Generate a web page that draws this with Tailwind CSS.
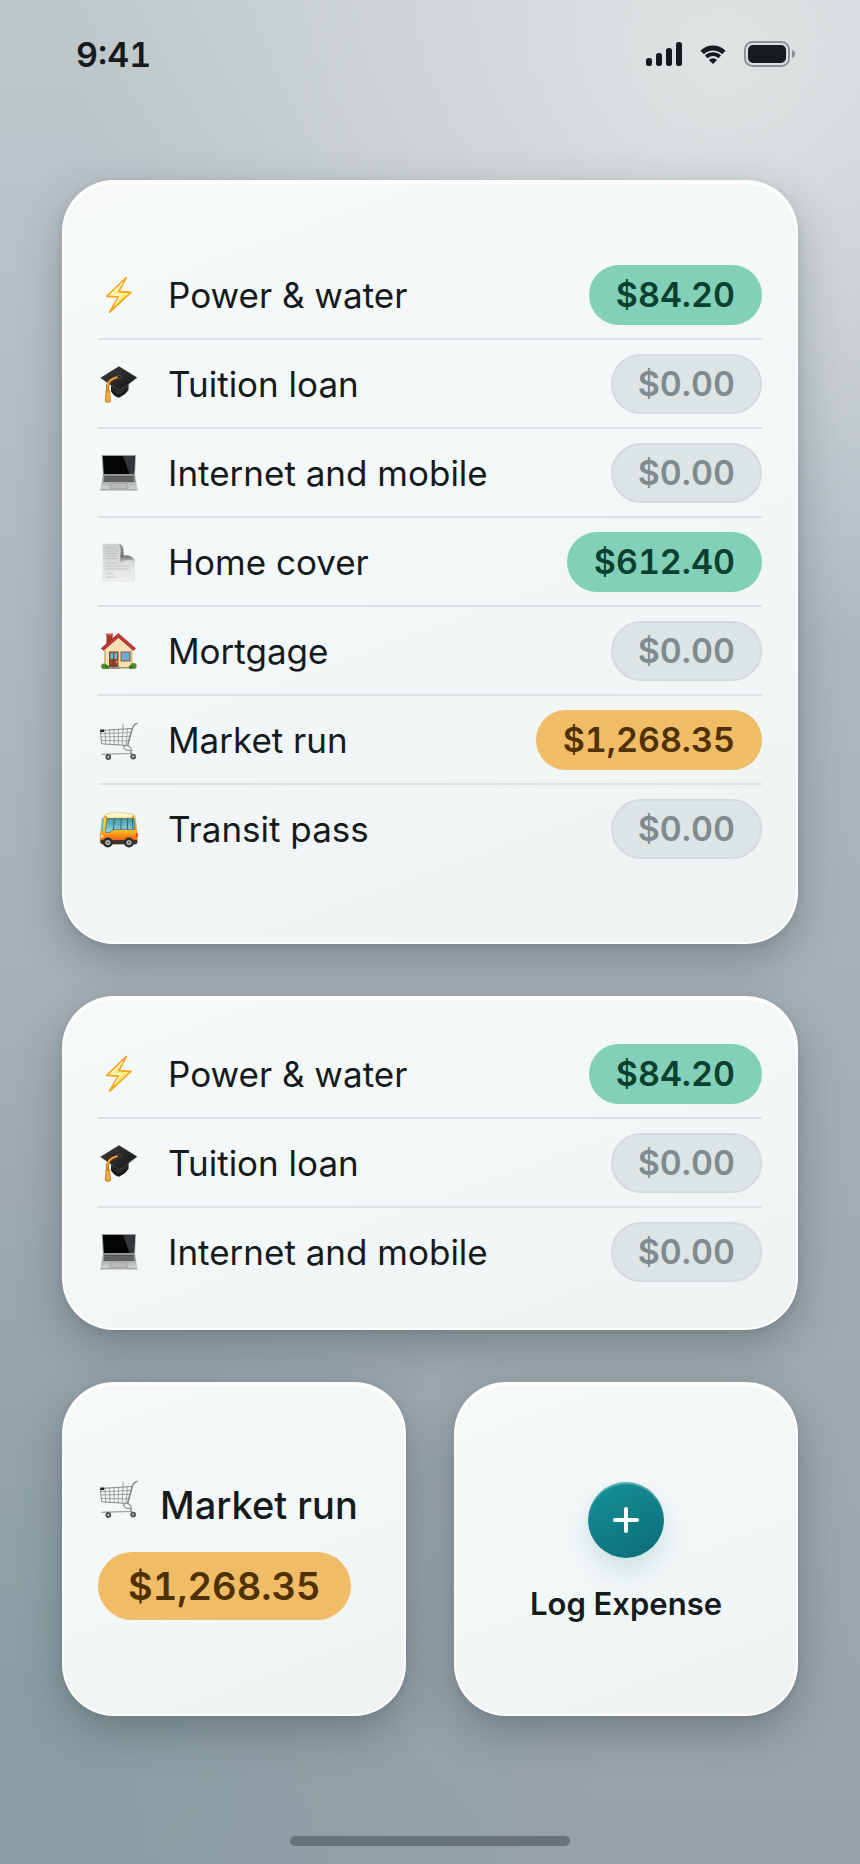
<!DOCTYPE html>
<html lang="en">
<head>
<meta charset="utf-8">
<meta name="viewport" content="width=device-width, initial-scale=1">
<title>Expenses</title>
<script src="https://cdn.jsdelivr.net/npm/@tailwindcss/browser@4"></script>
</head>
<body class="min-h-screen bg-[radial-gradient(ellipse_75%_32%_at_84%_3%,rgba(228,232,232,0.85),rgba(228,232,232,0)),radial-gradient(ellipse_70%_40%_at_0%_94%,rgba(112,146,152,0.4),rgba(112,146,152,0)),linear-gradient(180deg,#c0c8cc_0%,#b1b9c0_30%,#a4adb3_60%,#97a1a9_100%)] font-['Inter','Liberation_Sans',sans-serif] text-[#151b1d]">

<!-- Shared icon definitions -->
<svg class="absolute size-0" aria-hidden="true">
  <defs>
    <linearGradient id="g-bolt" x1="0" y1="0" x2="0" y2="1"><stop offset="0" stop-color="#fff7a8"/><stop offset="1" stop-color="#ffe04a"/></linearGradient>
    <linearGradient id="g-cap" x1="0" y1="0" x2="1" y2="1"><stop offset="0" stop-color="#3d3d3d"/><stop offset="1" stop-color="#151515"/></linearGradient>
    <linearGradient id="g-alu" x1="0" y1="0" x2="0" y2="1"><stop offset="0" stop-color="#8f8f8f"/><stop offset="1" stop-color="#d2d2d2"/></linearGradient>
    <linearGradient id="g-page" x1="0" y1="0" x2="0" y2="1"><stop offset="0" stop-color="#cbcbcb"/><stop offset="1" stop-color="#efefef"/></linearGradient>
    <linearGradient id="g-curl" x1="0" y1="0" x2="0" y2="1"><stop offset="0" stop-color="#9b9b9b"/><stop offset="0.6" stop-color="#6f6f6f"/><stop offset="1" stop-color="#dedede"/></linearGradient>
    <linearGradient id="g-bus" x1="0" y1="0" x2="0" y2="1"><stop offset="0" stop-color="#ffe14d"/><stop offset="0.55" stop-color="#ffc21f"/><stop offset="0.9" stop-color="#ef5a13"/></linearGradient>
    <linearGradient id="g-glass" x1="0" y1="0" x2="0" y2="1"><stop offset="0" stop-color="#4d97a6"/><stop offset="1" stop-color="#8fd9e6"/></linearGradient>
  </defs>
  <symbol id="i-bolt" viewBox="0 0 40 40">
    <path d="M28.2 2.600 8.800 21.300 20.400 22 11.600 37.200 33 17.300 21 16.600Z" fill="url(#g-bolt)" stroke="#f9a51b" stroke-width="1.700" stroke-linejoin="round"/>
    <path d="M25 7.600 13 19.600 23 20.200 17 30" fill="none" stroke="#fffbe0" stroke-width="1.200"/>
  </symbol>
  <symbol id="i-cap" viewBox="0 0 40 40">
    <path d="M13 20v7.500c2 3.500 5 5.500 8 6.300 4-2 8-5 9.500-8.300V17Z" fill="#191919"/>
    <path d="M13 22c2 4 5 6.500 8.500 7.300l9-6.800" fill="none" stroke="#4a4a4a" stroke-width=".8"/>
    <path d="M2.500 13.700 21 2.300l18 11.300L21.500 27Z" fill="url(#g-cap)"/>
    <path d="m2.500 13.700 19 13.300L39 13.600" fill="none" stroke="#565656" stroke-width=".8"/>
    <ellipse cx="21" cy="12.800" rx="2.600" ry="1.200" fill="#1b1b1b" stroke="#707070" stroke-width=".6"/>
    <path d="M19.500 13.300C13.500 15 10 17.500 9.600 22v6" fill="none" stroke="#7c4a08" stroke-width="3"/>
    <path d="M19.500 13.100C13.500 14.500 9.800 17 9.600 22v6" fill="none" stroke="#eda53a" stroke-width="1.900"/>
    <path d="M8 26.500h3.600l1 11c-1.500 1.300-4 1.300-5.400 0Z" fill="#e79a2c" stroke="#b86d10" stroke-width=".6"/>
    <path d="M9.300 29v8M11 29v8" stroke="#ffc970" stroke-width=".6"/>
  </symbol>
  <symbol id="i-laptop" viewBox="0 0 40 40">
    <path d="M3.600 2h34.400l-1 20H5Z" fill="#9b9b9b"/>
    <path d="M4.800 3h32l-.8 18H5.800Z" fill="#050505"/>
    <path d="M25 3h11.800L36 21h-4.500Z" fill="#34373a"/>
    <path d="M5 21.600h32l2.400 14.600H2.400Z" fill="url(#g-alu)"/>
    <path d="M6.500 23h29l1 6h-31Z" fill="#525252"/>
    <path d="M6.300 24.600h29.500M6 26.200h30.200M5.700 27.800h30.800" stroke="#969696" stroke-width=".5" stroke-dasharray="1.600 .5"/>
    <path d="M12.500 30.500h17l.5 5.200H12Z" fill="#bababa" stroke="#969696" stroke-width=".6"/>
    <path d="M2.400 36h37v1.600h-37Z" fill="#aaa"/>
  </symbol>
  <symbol id="i-page" viewBox="0 0 40 40">
    <path d="M5 2h17c2.500 1 3 5 3 12 8-1 11.500 1 11.500 6v19H5Z" fill="url(#g-page)" stroke="#dadada" stroke-width=".5"/>
    <path d="M21 2c4 .5 5 4 4.600 11.600 6-.6 10 1.400 11 5.600-5-2.500-9.500-1-15.400 2.500C22.500 13 24 6 21 2Z" fill="url(#g-curl)"/>
    <path d="M7.500 6h10M7.500 9h13M7.500 11.500h12M7.500 14h13M7.500 16.500h12M7.500 21h12M7.500 24h24M7.500 27h23M7.500 32h8M7.500 35h10" stroke="#b0b0b0" stroke-width=".6"/>
  </symbol>
  <symbol id="i-house" viewBox="0 0 40 40">
    <path d="M8.500 3.500h6V14h-6Z" fill="#a7352b"/><path d="M8 2.500h7v2.200H8Z" fill="#d05a4a"/>
    <path d="M6 17 20.500 4.500 34.500 17v20H6Z" fill="#f5dfb5"/>
    <path d="M6 18h2v19H6Zm26.500 0h2v19h-2Z" fill="#d9bd8b"/>
    <path d="m3.300 17.400 17-14.900L37.500 17.400l-2.200 1.800L20.500 6.600 5.500 19.200Z" fill="#c23a32" stroke="#842018" stroke-width=".7" stroke-linejoin="round"/>
    <path d="M11 20.500h9.500V37H11Z" fill="#8a4a2c"/><path d="M12.500 22h6.500v6h-6.500Z" fill="#6db6df"/><path d="M15.300 22h1v15h-1Z" fill="#643018"/><circle cx="18.700" cy="31" r=".9" fill="#e8c36c"/>
    <path d="M22.500 20.500h10v10h-10Z" fill="#8b623b"/><path d="M23.700 21.700h7.600v7.600h-7.600Z" fill="#66aee0"/>
    <path d="M10 36h12v2H10Z" fill="#9d9489"/><path d="M22 36h10v1.500H22Z" fill="#ad8f60"/>
    <circle cx="6" cy="35.200" r="2.800" fill="#4f8b28"/><circle cx="9" cy="36" r="1.900" fill="#38701c"/><circle cx="35.700" cy="35" r="2.900" fill="#4f8b28"/><circle cx="32.800" cy="36" r="1.900" fill="#38701c"/>
  </symbol>
  <symbol id="i-cart" viewBox="0 0 40 40">
    <g fill="none" stroke="#8a8a8a" stroke-linecap="round">
      <path d="M39 3.500c-2 .3-3.600 2-4.500 4.500l-4.800 17.500" stroke-width="1.400"/>
      <path d="M2.700 10.500 34 8.500l-4.700 17L4 23.800Z" stroke-width="1"/>
      <path d="M3 13.700l29.800-1.200M3.300 17l28.600-.7M3.600 20.500l27.300.4M7 10.300l.8 13.800M11.500 10l.5 14.300M16 9.700l.2 14.800M20.500 9.400l-.2 15.400M25 9.100l-.8 16M29.500 8.800l-1.600 16.400M25 4v5" stroke-width=".75"/>
      <path d="M27 25.500c-3 2.500 0 5.500 5.500 5l1.500 4M29.700 25.500c4 2 4.500 4 2.800 8L4 34.200M9 34l1.500 3" stroke-width="1.100"/>
    </g>
    <path d="M2.300 9.500h3.800v2.600H2.300Z" fill="#202020"/>
    <circle cx="10.300" cy="37" r="2.900" fill="#555"/><circle cx="10.300" cy="37" r="1" fill="#ccc"/>
    <circle cx="35.200" cy="36.600" r="2.900" fill="#555"/><circle cx="35.200" cy="36.600" r="1" fill="#ccc"/>
  </symbol>
  <symbol id="i-bus" viewBox="0 0 40 40">
    <path d="M6.500 7C8 4.500 12 4 21 4s14 .7 16 3l2.300 18v8c0 1.500-1 2-2.300 2H5c-2 0-2.800-.8-2.800-2.500V25Z" fill="url(#g-bus)" stroke="#d58a17" stroke-width=".5"/>
    <path d="M6.500 8.500C8 4.500 12 4 21 4s14 .7 16 4.500Z" fill="#fff5c9"/>
    <path d="M2.700 31h36.500v2.400c0 1.200-1 1.800-2.200 1.800H5c-1.600 0-2.300-1-2.300-2Z" fill="#3d3434"/>
    <path d="M3.700 10.500c.4-1.500 1-2.500 2-2.700L4.800 22H2.600Z" fill="#69b9c7"/>
    <path d="M9 9.500h27l1.200 11H16l-4 2.800H7.300Z" fill="url(#g-glass)" stroke="#376c78" stroke-width=".7"/>
    <path d="M16.500 9.500 15.300 21M23 9.500V20.500M29.500 9.500V20.500M34.300 9.500l.7 11" stroke="#2f626f" stroke-width="1"/>
    <circle cx="8" cy="8.200" r="1.200" fill="#ef8f24"/><circle cx="35" cy="8.200" r="1.200" fill="#ef8f24"/>
    <circle cx="4" cy="27.500" r="1.400" fill="#ffe9a1"/><path d="M38 24h1.500v4H38Z" fill="#d83d18"/>
    <circle cx="9.800" cy="33.500" r="5" fill="#2b2b2b"/><circle cx="9.800" cy="33.500" r="2.600" fill="#b5b5b5"/><circle cx="9.800" cy="33.500" r="1.100" fill="#555"/>
    <circle cx="31" cy="33.500" r="5" fill="#2b2b2b"/><circle cx="31" cy="33.500" r="2.600" fill="#b5b5b5"/><circle cx="31" cy="33.500" r="1.100" fill="#555"/>
  </symbol>
</svg>

<div class="flex min-h-screen flex-col">
  <header class="flex h-[108px] items-center justify-between pr-[64px] pl-[76px]">
    <time class="pt-0.5 text-[34px] leading-10 font-semibold tabular-nums">9:41</time>
    <div class="flex items-center gap-[18px]">
      <svg class="h-6 w-9" viewBox="0 0 36 24" fill="#151b1d" aria-label="Signal"><rect y="16" width="6" height="8" rx="2.500"/><rect x="10" y="11" width="6" height="13" rx="2.500"/><rect x="20" y="6" width="6" height="18" rx="2.500"/><rect x="30" width="6" height="24" rx="2.500"/></svg>
      <svg class="h-5 w-[26px]" viewBox="0 0 26 20" aria-label="Wi-Fi">
        <g fill="none" stroke="#151b1d"><path d="M2.200 8.400a15.300 15.300 0 0 1 21.600 0" stroke-width="5"/><path d="M6.300 12.900a9.500 9.500 0 0 1 13.400 0" stroke-width="3.800"/></g>
        <path d="M8.900 16a5.800 5.800 0 0 1 8.200 0L13 20Z" fill="#151b1d"/>
      </svg>
      <svg class="h-[26px] w-[52px]" viewBox="0 0 52 26" aria-label="Battery"><rect x="1" y="1" width="44" height="24" rx="7.500" fill="none" stroke="#151b1d" stroke-opacity=".4" stroke-width="2"/><rect x="4" y="4" width="38" height="18" rx="5" fill="#151b1d"/><path d="M48 9c4 1.200 4 6.800 0 8Z" fill="#151b1d" fill-opacity=".4"/></svg>
    </div>
  </header>

  <main class="flex flex-col gap-[52px] px-[62px] pt-[72px]">
    <section aria-label="All expenses" class="rounded-[52px] border-2 border-white/90 bg-linear-160 from-[#f7f9f9] via-[#f2f7f8] to-[#eef2f3] px-[34px] pt-[69px] pb-[70px] shadow-[inset_0_2px_0_#fff,0_2px_6px_rgba(40,55,60,0.1),0_16px_44px_rgba(40,55,60,0.32)]">
      <ul class="divide-y-2 divide-[#dde2e4]">
        <li class="flex items-center pt-[14px] pb-[13px]"><svg class="mr-[30px] size-10 shrink-0" aria-hidden="true"><use href="#i-bolt"/></svg><span class="grow text-[35px] leading-[60px]">Power &amp; water</span><span class="rounded-full bg-[#82d0b7] px-[27px] text-[34px] leading-[60px] font-semibold tabular-nums text-[#0a4030]">$84.20</span></li>
        <li class="flex items-center pt-[14px] pb-[13px]"><svg class="mr-[30px] size-10 shrink-0" aria-hidden="true"><use href="#i-cap"/></svg><span class="grow text-[35px] leading-[60px]">Tuition loan</span><span class="rounded-full border-2 border-[#d5dbdd] bg-[#dde4e6] px-[25px] text-[34px] leading-[56px] font-semibold tabular-nums text-[#808b8f]">$0.00</span></li>
        <li class="flex items-center pt-[14px] pb-[13px]"><svg class="mr-[30px] size-10 shrink-0" aria-hidden="true"><use href="#i-laptop"/></svg><span class="grow text-[35px] leading-[60px]">Internet and mobile</span><span class="rounded-full border-2 border-[#d5dbdd] bg-[#dde4e6] px-[25px] text-[34px] leading-[56px] font-semibold tabular-nums text-[#808b8f]">$0.00</span></li>
        <li class="flex items-center pt-[14px] pb-[13px]"><svg class="mr-[30px] size-10 shrink-0" aria-hidden="true"><use href="#i-page"/></svg><span class="grow text-[35px] leading-[60px]">Home cover</span><span class="rounded-full bg-[#82d0b7] px-[27px] text-[34px] leading-[60px] font-semibold tabular-nums text-[#0a4030]">$612.40</span></li>
        <li class="flex items-center pt-[14px] pb-[13px]"><svg class="mr-[30px] size-10 shrink-0" aria-hidden="true"><use href="#i-house"/></svg><span class="grow text-[35px] leading-[60px]">Mortgage</span><span class="rounded-full border-2 border-[#d5dbdd] bg-[#dde4e6] px-[25px] text-[34px] leading-[56px] font-semibold tabular-nums text-[#808b8f]">$0.00</span></li>
        <li class="flex items-center pt-[14px] pb-[13px]"><svg class="mr-[30px] size-10 shrink-0" aria-hidden="true"><use href="#i-cart"/></svg><span class="grow text-[35px] leading-[60px]">Market run</span><span class="rounded-full bg-[#f0bc65] px-[27px] text-[34px] leading-[60px] font-semibold tabular-nums text-[#4f3104]">$1,268.35</span></li>
        <li class="flex items-center pt-[14px] pb-[13px]"><svg class="mr-[30px] size-10 shrink-0" aria-hidden="true"><use href="#i-bus"/></svg><span class="grow text-[35px] leading-[60px]">Transit pass</span><span class="rounded-full border-2 border-[#d5dbdd] bg-[#dde4e6] px-[25px] text-[34px] leading-[56px] font-semibold tabular-nums text-[#808b8f]">$0.00</span></li>
      </ul>
    </section>

    <section aria-label="Top expenses" class="rounded-[52px] border-2 border-white/90 bg-linear-160 from-[#f7f9f9] via-[#f2f7f8] to-[#eef2f3] px-[34px] pt-8 pb-[33px] shadow-[inset_0_2px_0_#fff,0_2px_6px_rgba(40,55,60,0.1),0_16px_44px_rgba(40,55,60,0.32)]">
      <ul class="divide-y-2 divide-[#dde2e4]">
        <li class="flex items-center pt-[14px] pb-[13px]"><svg class="mr-[30px] size-10 shrink-0" aria-hidden="true"><use href="#i-bolt"/></svg><span class="grow text-[35px] leading-[60px]">Power &amp; water</span><span class="rounded-full bg-[#82d0b7] px-[27px] text-[34px] leading-[60px] font-semibold tabular-nums text-[#0a4030]">$84.20</span></li>
        <li class="flex items-center pt-[14px] pb-[13px]"><svg class="mr-[30px] size-10 shrink-0" aria-hidden="true"><use href="#i-cap"/></svg><span class="grow text-[35px] leading-[60px]">Tuition loan</span><span class="rounded-full border-2 border-[#d5dbdd] bg-[#dde4e6] px-[25px] text-[34px] leading-[56px] font-semibold tabular-nums text-[#808b8f]">$0.00</span></li>
        <li class="flex items-center pt-[14px] pb-[13px]"><svg class="mr-[30px] size-10 shrink-0" aria-hidden="true"><use href="#i-laptop"/></svg><span class="grow text-[35px] leading-[60px]">Internet and mobile</span><span class="rounded-full border-2 border-[#d5dbdd] bg-[#dde4e6] px-[25px] text-[34px] leading-[56px] font-semibold tabular-nums text-[#808b8f]">$0.00</span></li>
      </ul>
    </section>

    <div class="grid grid-cols-2 gap-12">
      <section aria-label="Latest expense" class="flex flex-col items-start justify-center gap-5 rounded-[52px] border-2 border-white/90 bg-linear-160 from-[#f7f9f9] via-[#f2f7f8] to-[#eef2f3] px-[34px] py-[94px] shadow-[inset_0_2px_0_#fff,0_2px_6px_rgba(40,55,60,0.1),0_16px_44px_rgba(40,55,60,0.32)]">
        <div class="flex items-start gap-[22px]"><svg class="size-10 shrink-0" aria-hidden="true"><use href="#i-cart"/></svg><span class="text-[38px] leading-[54px] font-medium whitespace-nowrap">Market run</span></div>
        <span class="rounded-full bg-[#f0bc65] px-[30px] text-[38px] leading-[68px] font-semibold tabular-nums text-[#4f3104]">$1,268.35</span>
      </section>
      <button type="button" class="flex flex-col items-center justify-center gap-[26px] rounded-[52px] border-2 border-white/90 bg-linear-160 from-[#f7f9f9] via-[#f2f7f8] to-[#eef2f3] px-[34px] pt-[98px] pb-[90px] shadow-[inset_0_2px_0_#fff,0_2px_6px_rgba(40,55,60,0.1),0_16px_44px_rgba(40,55,60,0.32)]">
        <span class="flex size-[76px] items-center justify-center rounded-full bg-linear-150 from-[#159299] to-[#0c6c76] shadow-[inset_0_2px_1px_rgba(255,255,255,0.3),0_12px_24px_rgba(13,110,120,0.16)]">
          <svg class="size-7" viewBox="0 0 28 28" fill="none" stroke="#fff" stroke-width="4" stroke-linecap="round" aria-hidden="true"><path d="M14 3v22M3 14h22"/></svg>
        </span>
        <span class="text-[31px] leading-10 font-semibold whitespace-nowrap">Log Expense</span>
      </button>
    </div>
  </main>

  <footer class="mt-auto flex justify-center pb-[18px]"><div class="h-[10px] w-[280px] rounded-full bg-[#677378]"></div></footer>
</div>
</body>
</html>
